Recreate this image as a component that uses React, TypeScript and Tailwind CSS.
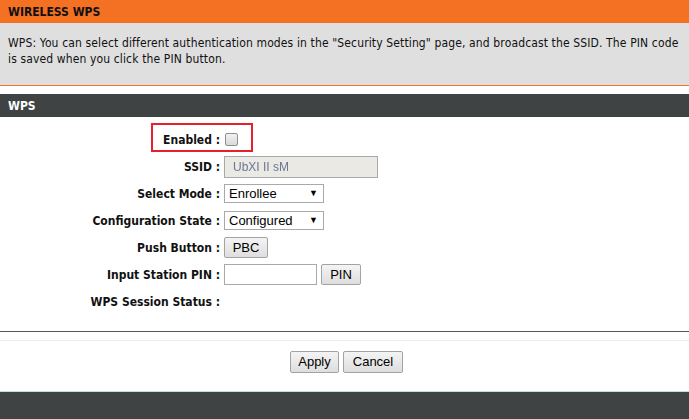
const ui = { fontFamily: "Tahoma, 'DejaVu Sans Condensed', 'Liberation Sans', sans-serif" };
const ctl = { fontFamily: "Arial, 'Liberation Sans', sans-serif" };

function Row({ label, children }: { label: string; children?: React.ReactNode }) {
  return (
    <div className="flex items-center h-[27px]">
      <div className="w-[221px] text-right font-bold text-[12px] text-[#111] pr-[1px]">{label}</div>
      <div className="flex items-center gap-1 pl-[3px]">{children}</div>
    </div>
  );
}

function Btn({ children, w }: { children: React.ReactNode; w: string }) {
  return (
    <div
      className={`${w} h-[21px] flex items-center justify-center border border-[#a3a3a3] rounded-[2px] bg-gradient-to-b from-[#f4f4f4] to-[#dedede] text-[13px] text-black`}
      style={ctl}
    >
      {children}
    </div>
  );
}

function FakeSelect({ value }: { value: string }) {
  return (
    <div
      className="w-[100px] h-[19px] flex items-center justify-between pl-[4px] pr-[5px] border border-[#a9a9a9] bg-white text-[13px] text-black"
      style={ctl}
    >
      <span>{value}</span>
      <span className="text-[9px]">▼</span>
    </div>
  );
}

export default function App() {
  return (
    <div className="w-[689px] h-[419px] bg-white flex flex-col overflow-hidden" style={ui}>
      <div className="h-[23px] bg-[#f47022] flex items-center px-2 pt-[1px] font-bold text-[12px] text-[#111]">
        WIRELESS WPS
      </div>
      <div className="h-[63px] bg-[#dfdfdf] pl-2 pr-[10px] pt-[12px] text-[12px] leading-[16px] tracking-[0.13px] text-[#111] border-b border-[#f47022]">
        WPS: You can select different authentication modes in the "Security Setting" page, and broadcast the SSID. The PIN code is saved when you click the PIN button.
      </div>
      <div className="h-[8px]" />
      <div className="h-[23px] bg-[#404344] flex items-center px-2 font-bold text-[12px] text-white">WPS</div>

      <div className="relative flex flex-col pt-[9px]">
        <div className="absolute left-[151px] top-[6px] w-[102px] h-[29px] border-2 border-[#e8202b]" />
        <Row label="Enabled :">
          <div className="w-[13px] h-[13px] ml-[1px] rounded-[2px] border border-[#8f8f8f] bg-gradient-to-b from-[#f2f2f2] to-[#d9d9d9]" />
        </Row>
        <Row label="SSID :">
          <div className="w-[154px] h-[22px] flex items-center px-[8px] border border-[#a9a9a9] bg-[#ebe9e4] text-[12px] text-[#6c7694] blur-[0.4px]" style={ctl}>
            UbXI II sM
          </div>
        </Row>
        <Row label="Select Mode :">
          <FakeSelect value="Enrollee" />
        </Row>
        <Row label="Configuration State :">
          <FakeSelect value="Configured" />
        </Row>
        <Row label="Push Button :">
          <Btn w="w-[44px]">PBC</Btn>
        </Row>
        <Row label="Input Station PIN :">
          <div className="w-[93px] h-[21px] border border-[#a9a9a9] bg-white" />
          <Btn w="w-[40px]">PIN</Btn>
        </Row>
        <Row label="WPS Session Status :" />
      </div>

      <div className="h-[16px]" />
      <div className="h-px bg-[#555]" />
      <div className="h-[8px]" />
      <div className="h-px bg-[#ececec]" />
      <div className="flex justify-center gap-1 pt-[10px] pl-[4px]">
        <Btn w="w-[49px] h-[22px]">Apply</Btn>
        <Btn w="w-[60px] h-[22px]">Cancel</Btn>
      </div>
      <div className="flex-1" />
      <div className="h-[28px] bg-[#404344] border-t border-[#c9d9e2]" />
    </div>
  );
}
